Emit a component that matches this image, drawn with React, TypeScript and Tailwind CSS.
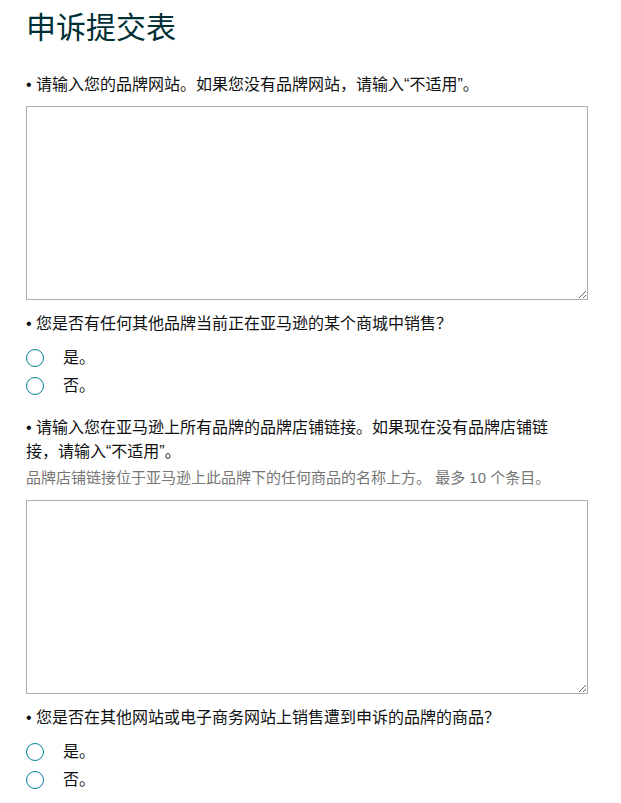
import React from "react";

const font = { fontFamily: '"Liberation Sans", "Noto Sans CJK SC", sans-serif' };

function Radio({ label }: { label: string }) {
  return (
    <label className="flex items-center h-[28px] cursor-pointer">
      <span className="w-[18px] h-[18px] rounded-full border-[1.5px] border-[#008296] bg-white shrink-0" />
      <span className="ml-[19px] text-[16px] leading-[24px] text-[#0f1111]">{label}</span>
    </label>
  );
}

function Question({ text }: { text: string }) {
  return (
    <div className="text-[16px] leading-[24px] text-[#0f1111]">• {text}</div>
  );
}

export default function App() {
  return (
    <div className="bg-white w-[621px] min-h-[803px] pl-[26px] pr-[33px] pt-[10px]" style={font}>
      <h1 className="text-[30px] leading-[36px] text-[#002f36] font-normal">申诉提交表</h1>
      <div className="mt-[27px]">
        <Question text="请输入您的品牌网站。如果您没有品牌网站，请输入“不适用”。" />
        <textarea className="block mt-[9px] w-full h-[194px] border border-[#a6b2b2] rounded-none outline-none p-2 text-[15px]" />
      </div>
      <div className="mt-[12px]">
        <Question text="您是否有任何其他品牌当前正在亚马逊的某个商城中销售？" />
        <div className="mt-[8px] flex flex-col">
          <Radio label="是。" />
          <Radio label="否。" />
        </div>
      </div>
      <div className="mt-[16px]">
        <div className="pr-[22px]">
          <Question text="请输入您在亚马逊上所有品牌的品牌店铺链接。如果现在没有品牌店铺链接，请输入“不适用”。" />
        </div>
        <div className="mt-[2px] text-[15px] leading-[24px] text-[#767676]">
          品牌店铺链接位于亚马逊上此品牌下的任何商品的名称上方。 最多 10 个条目。
        </div>
        <textarea className="block mt-[10px] w-full h-[194px] border border-[#a6b2b2] rounded-none outline-none p-2 text-[15px]" />
      </div>
      <div className="mt-[12px]">
        <Question text="您是否在其他网站或电子商务网站上销售遭到申诉的品牌的商品？" />
        <div className="mt-[8px] flex flex-col">
          <Radio label="是。" />
          <Radio label="否。" />
        </div>
      </div>
    </div>
  );
}
